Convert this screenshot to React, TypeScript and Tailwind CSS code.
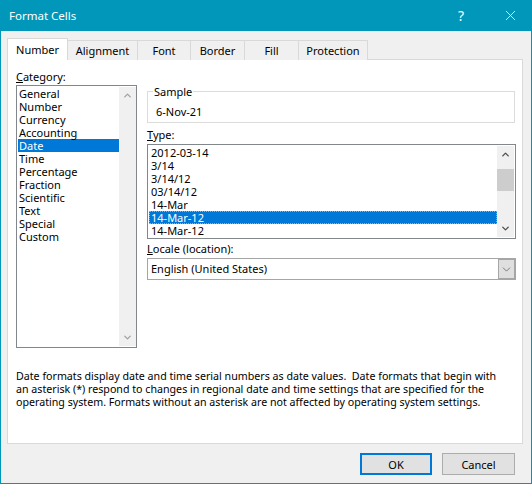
import { ChevronDown, ChevronUp, X } from 'lucide-react';

const categories = ['General', 'Number', 'Currency', 'Accounting', 'Date', 'Time', 'Percentage', 'Fraction', 'Scientific', 'Text', 'Special', 'Custom'];
const types = ['2012-03-14', '3/14', '3/14/12', '03/14/12', '14-Mar', '14-Mar-12', '14-Mar-12'];
const tabs = ['Alignment', 'Font', 'Border', 'Fill', 'Protection'];
const tabWidths: Record<string, string> = {
  Alignment: 'w-[71px]',
  Font: 'w-[54px]',
  Border: 'w-[55px]',
  Fill: 'w-[55px]',
  Protection: 'w-[70px]',
};

function ScrollBar({ thumb, disabled }: { thumb?: boolean; disabled?: boolean }) {
  const arrow = disabled ? 'text-[#a3a3a3]' : 'text-[#505050]';
  return (
    <div className="flex w-[17px] shrink-0 flex-col bg-[#f0f0f0]">
      <div className={`flex h-[17px] items-center justify-center ${arrow}`}>
        <ChevronUp size={11} strokeWidth={3} />
      </div>
      <div className="flex-1">
        {thumb && <div className="mt-[6px] h-[22px] bg-[#cdcdcd]" />}
      </div>
      <div className={`flex h-[17px] items-center justify-center ${arrow}`}>
        <ChevronDown size={11} strokeWidth={3} />
      </div>
    </div>
  );
}

export default function App() {
  return (
    <div className="flex h-[484px] w-[532px] flex-col border border-[#0097bb] bg-[#f0f0f0] text-[11px] leading-[13px] text-black [font-family:'Noto_Sans',sans-serif]">
      {/* Title bar */}
      <div className="flex h-[30px] shrink-0 items-center bg-[#0097bb] pb-[2px] pl-[8px] text-white">
        <span className="flex-1 text-[11.5px]">Format Cells</span>
        <span className="mr-[38px] text-[14px]">?</span>
        <X size={17} strokeWidth={1.2} className="mr-[12px]" />
      </div>

      <div className="flex flex-1 flex-col px-[6px]">
        {/* Tabs */}
        <div className="relative z-10 flex h-[22px] shrink-0 mt-[7px] items-end">
          <div className="flex h-[22px] w-[61px] items-center justify-center border border-b-0 border-[#d9d9d9] bg-white">Number</div>
          {tabs.map(tab => (
            <div key={tab} className={`-ml-[1px] flex h-[20px] items-center justify-center border border-b-0 border-[#d9d9d9] bg-[#f0f0f0] ${tabWidths[tab]}`}>
              {tab}
            </div>
          ))}
        </div>

        {/* Panel */}
        <div className="-mt-[1px] flex h-[385px] w-[516px] shrink-0 flex-col border border-[#d9d9d9] bg-white px-[8px]">
          <div className="flex gap-[10px]">
            <div className="w-[121px] shrink-0 pt-[10px]">
              <div><span className="underline">C</span>ategory:</div>
              <div className="mt-[2px] flex h-[263px] border border-[#82878c] p-[1px] pr-0">
                <div className="flex-1">
                  {categories.map(c => (
                    <div key={c} className={`h-[13px] pl-[1px] ${c === 'Date' ? 'bg-[#0078d7] text-white' : ''}`}>{c}</div>
                  ))}
                </div>
                <ScrollBar disabled />
              </div>
            </div>

            <div className="w-[369px] shrink-0">
              <fieldset className="mt-[25px] h-[38px] w-[368px] border border-[#dcdcdc]">
                <legend className="ml-[5px] px-[1px]">Sample</legend>
                <div className="mt-[7px] pl-[8px]">6-Nov-21</div>
              </fieldset>

              <div className="mt-[5px]"><span className="underline">T</span>ype:</div>
              <div className="mt-[3px] flex h-[95px] border border-[#82878c] p-[1px]">
                <div className="flex-1 overflow-hidden">
                  {types.map((t, i) => (
                    <div key={i} className={`h-[13px] pl-[2px] ${i === 5 ? 'bg-[#0078d7] text-white outline-1 -outline-offset-1 outline-dotted outline-[#e8a050]' : ''}`}>{t}</div>
                  ))}
                </div>
                <ScrollBar thumb />
              </div>

              <div className="mt-[3px]"><span className="underline">L</span>ocale (location):</div>
              <div className="mt-[3px] flex h-[22px] items-center border border-[#a6a6a6] pl-[3px]">
                <span className="flex-1 pb-[2px]">English (United States)</span>
                <div className="flex h-full w-[17px] items-center justify-center border border-[#a6a6a6] bg-[#dfdfdf] text-[#505050]">
                  <ChevronDown size={13} strokeWidth={1.3} />
                </div>
              </div>
            </div>
          </div>

          <p className="mt-[22px] whitespace-pre text-[10.67px]">
            {'Date formats display date and time serial numbers as date values.  Date formats that begin with\nan asterisk (*) respond to changes in regional date and time settings that are specified for the\noperating system. Formats without an asterisk are not affected by operating system settings.'}
          </p>
        </div>

        {/* Footer buttons */}
        <div className="mt-[9px] flex justify-end gap-[10px] pr-[10px]">
          <button className="h-[22px] w-[72px] border-2 border-[#0078d7] bg-[#e1e1e1]">OK</button>
          <button className="h-[22px] w-[73px] border border-[#adadad] bg-[#e1e1e1]">Cancel</button>
        </div>
      </div>
    </div>
  );
}
